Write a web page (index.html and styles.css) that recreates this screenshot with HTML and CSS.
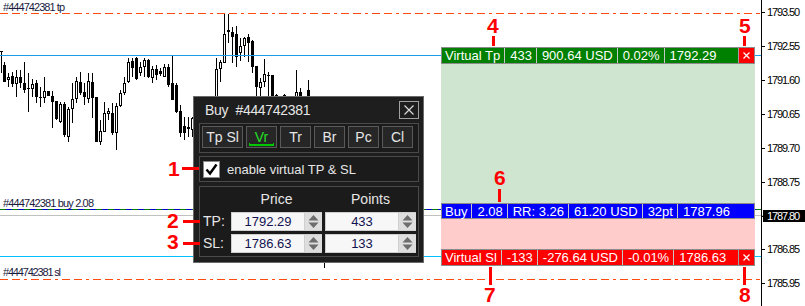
FILE: index.html
```html
<!DOCTYPE html>
<html lang="en">
<head>
    <meta charset="UTF-8">
    <meta name="viewport" content="width=device-width, initial-scale=1.0">
    <title>Virtual TP / SL</title>
    <link rel="stylesheet" href="styles.css">
</head>
<body>
<div class="chart">
    <svg class="canvas" width="805" height="306" viewBox="0 0 805 306">
        <g id="candles"></g>
        <line class="l-stop" x1="0" y1="13.5" x2="760" y2="13.5"/>
        <line class="l-stop" x1="0" y1="279.5" x2="760" y2="279.5"/>
        <line class="l-vtp" x1="0" y1="55.5" x2="761" y2="55.5"/>
        <line class="l-vsl" x1="0" y1="256.5" x2="761" y2="256.5"/>
        <line class="l-bid" x1="0" y1="215.5" x2="763" y2="215.5"/>
        <line class="l-open" x1="0" y1="209.5" x2="761" y2="209.5"/>
        <line class="l-open-dash" x1="0" y1="209.5" x2="761" y2="209.5"/>

        <text class="obj" x="3" y="11" textLength="62">#444742381 tp</text>
        <text class="obj" x="3" y="207" textLength="91">#444742381 buy 2.08</text>
        <text class="obj" x="3" y="276" textLength="58">#444742381 sl</text>

        <rect class="axis" x="761" y="0" width="1" height="306"/>
        <g id="ticks"></g>
        <text class="ax" x="767" y="16" textLength="33">1793.50</text>
        <text class="ax" x="767" y="50" textLength="33">1792.55</text>
        <text class="ax" x="767" y="84" textLength="33">1791.60</text>
        <text class="ax" x="767" y="118" textLength="33">1790.65</text>
        <text class="ax" x="767" y="152" textLength="33">1789.70</text>
        <text class="ax" x="767" y="186" textLength="33">1788.75</text>
        <rect class="axis" x="763" y="210" width="42" height="12"/>
        <text class="ax ax-now" x="767" y="220" textLength="33">1787.80</text>
        <text class="ax" x="767" y="253" textLength="33">1786.85</text>
        <text class="ax" x="767" y="287" textLength="33">1785.95</text>
    </svg>

    <div class="zone zone-tp"></div>
    <div class="zone zone-sl"></div>

    <div class="bar bar-tp">
        <span>Virtual Tp</span><span>433</span><span>900.64 USD</span><span>0.02%</span><span>1792.29</span>
        <i class="x"><svg width="7" height="7"><path d="M0.5 0.5L6.5 6.5M6.5 0.5L0.5 6.5"/></svg></i>
    </div>
    <div class="bar bar-buy">
        <span>Buy</span><span>2.08</span><span>RR: 3.26</span><span>61.20 USD</span><span>32pt</span><span>1787.96</span>
    </div>
    <div class="bar bar-sl">
        <span>Virtual Sl</span><span>-133</span><span>-276.64 USD</span><span>-0.01%</span><span>1786.63</span>
        <i class="x"><svg width="7" height="7"><path d="M0.5 0.5L6.5 6.5M6.5 0.5L0.5 6.5"/></svg></i>
    </div>

    <div class="dlg">
        <div class="dlg-head">
            <span class="dlg-title">Buy  #444742381</span>
            <span class="dlg-close"><svg width="10" height="10"><path d="M0.5 0.5L9.5 9.5M9.5 0.5L0.5 9.5"/></svg></span>
        </div>
        <div class="panel tabs">
            <span class="tab">Tp Sl</span>
            <span class="tab on">Vr</span>
            <span class="tab">Tr</span>
            <span class="tab">Br</span>
            <span class="tab">Pc</span>
            <span class="tab">Cl</span>
        </div>
        <div class="panel check">
            <span class="box"><svg width="15" height="15"><path d="M2.5 7.5L6 11.5L12.5 2.5"/></svg></span>
            <span>enable virtual TP &amp; SL</span>
        </div>
        <div class="panel levels">
            <span></span>
            <span class="hd">Price</span>
            <span class="hd">Points</span>

            <span class="lbl">TP:</span>
            <div class="spin"><span class="val">1792.29</span><span class="arr"><svg width="17" height="17"><path d="M3.5 7.5L8.5 2L13.5 7.5Z M3.5 9.5L8.5 15L13.5 9.5Z"/></svg></span></div>
            <div class="spin"><span class="val">433</span><span class="arr"><svg width="17" height="17"><path d="M3.5 7.5L8.5 2L13.5 7.5Z M3.5 9.5L8.5 15L13.5 9.5Z"/></svg></span></div>

            <span class="lbl">SL:</span>
            <div class="spin"><span class="val">1786.63</span><span class="arr"><svg width="17" height="17"><path d="M3.5 7.5L8.5 2L13.5 7.5Z M3.5 9.5L8.5 15L13.5 9.5Z"/></svg></span></div>
            <div class="spin"><span class="val">133</span><span class="arr"><svg width="17" height="17"><path d="M3.5 7.5L8.5 2L13.5 7.5Z M3.5 9.5L8.5 15L13.5 9.5Z"/></svg></span></div>
        </div>
    </div>

    <span class="num n1">1</span><span class="dash d1"></span>
    <span class="num n2">2</span><span class="dash d2"></span>
    <span class="num n3">3</span><span class="dash d3"></span>
    <span class="num n4">4</span><span class="stem s4"></span>
    <span class="num n5">5</span><span class="stem s5"></span>
    <span class="num n6">6</span><span class="stem s6"></span>
    <span class="num n7">7</span><span class="stem s7"></span>
    <span class="num n8">8</span><span class="stem s8"></span>
</div>

<script>
    // x, wick top, wick bottom, body top, body bottom, bull
    var candles = [
        [1,51,73,51,52,0], [4,62,82,65,82,0], [8,73,87,77,80,1], [12,72,87,76,84,0],
        [16,70,97,77,84,1], [20,70,88,77,83,0], [24,62,93,83,90,0], [28,73,112,88,89,0],
        [32,79,97,84,89,1], [36,80,103,83,97,0], [40,87,107,97,98,0], [44,77,103,91,98,1],
        [48,91,96,91,96,0], [52,91,128,96,102,0], [56,101,120,101,119,0], [60,102,123,104,122,1],
        [64,102,137,104,135,0], [68,107,142,109,137,1], [72,83,123,99,109,1], [76,77,103,81,99,1],
        [80,72,95,82,93,0], [84,83,105,92,97,0], [88,73,103,81,99,1], [92,73,118,82,98,0],
        [96,97,142,97,142,0], [100,120,145,131,142,1], [104,102,132,113,132,1], [108,108,120,111,114,1],
        [112,103,135,113,133,0], [116,103,150,106,133,1], [120,90,107,93,106,1], [124,77,95,83,93,1],
        [128,58,83,62,82,1], [132,58,77,61,68,0], [136,57,80,58,79,0], [140,62,76,67,73,1],
        [144,58,77,60,67,1], [148,59,78,60,77,0], [152,66,83,69,78,1], [156,65,80,69,75,0],
        [160,68,76,71,74,0], [164,64,77,67,77,1], [168,64,87,67,85,0], [172,55,100,83,100,0],
        [176,83,113,85,112,0], [180,105,137,111,133,0], [184,117,140,126,133,0], [188,117,137,127,129,0],
        [192,117,137,118,130,1], [216,58,100,69,100,1], [220,60,82,62,69,1], [224,14,63,34,63,1],
        [228,14,43,30,32,0], [232,27,63,32,37,0], [236,26,67,34,57,0], [240,38,61,46,53,1],
        [244,37,57,38,46,1], [248,34,62,37,43,0], [252,40,73,41,67,0], [256,66,100,66,87,0],
        [260,78,100,82,88,1], [264,59,87,74,82,1], [268,72,100,75,76,0], [272,75,100,75,100,0],
        [276,94,100,95,96,0], [284,94,100,95,96,0], [296,70,100,92,100,1], [300,88,100,92,100,0],
        [308,80,100,90,100,0], [324,255,268,262,263,0]
    ];
    var ns = "http://www.w3.org/2000/svg";

    function rect(parent, x, y, w, h, cls) {
        var r = document.createElementNS(ns, "rect");
        r.setAttribute("x", x);
        r.setAttribute("y", y);
        r.setAttribute("width", w);
        r.setAttribute("height", h);
        r.setAttribute("class", cls);
        parent.appendChild(r);
    }

    var g = document.getElementById("candles");
    for (var i = 0; i < candles.length; i++) {
        var c = candles[i];
        rect(g, c[0], c[1], 1, c[2] - c[1], "wick");
        rect(g, c[0] - 1, c[3], 3, Math.max(1, c[4] - c[3]), "body");
        if (c[5] && c[4] - c[3] > 2) {
            rect(g, c[0], c[3] + 1, 1, c[4] - c[3] - 2, "hollow");
        }
    }

    var ticks = document.getElementById("ticks");
    var ys = [12, 46, 80, 114, 148, 182, 216, 249, 283];
    for (var j = 0; j < ys.length; j++) {
        rect(ticks, 762, ys[j], 3, 1, "axis");
    }
</script>
</body>
</html>
```

FILE: styles.css
```css
body {
    margin: 0;
    background: #fff;
    font-family: "Liberation Sans", Arial, sans-serif;
}
.chart {
    position: relative;
    width: 805px;
    height: 306px;
    overflow: hidden;
}
.canvas {
    display: block;
}
.canvas line {
    shape-rendering: crispEdges;
    stroke-width: 1;
}

/* chart objects */
.l-stop {
    stroke: #ff4a10;
    stroke-dasharray: 8 4 8 4 3 4;
}
.l-vtp {
    stroke: #1a9ee8;
}
.l-vsl {
    stroke: #00c0ff;
}
.l-bid {
    stroke: #c0c0c0;
}
.l-open {
    stroke: #0000c8;
}
.l-open-dash {
    stroke: #008000;
    stroke-dasharray: 6 6;
}
.wick, .body, .axis {
    fill: #000;
}
.hollow {
    fill: #fff;
}
.obj {
    font-size: 11px;
    fill: #1a1a40;
}
.ax {
    font-size: 11px;
    fill: #000;
}
.ax-now {
    fill: #fff;
}

/* virtual levels */
.zone {
    position: absolute;
    left: 441px;
    width: 314px;
}
.zone-tp {
    top: 64px;
    height: 139px;
    background: #cfe5cf;
}
.zone-sl {
    top: 219px;
    height: 30px;
    background: #ffcccc;
}
.bar {
    position: absolute;
    left: 441px;
    width: 314px;
    height: 17px;
    box-sizing: border-box;
    border: 1px solid #8c8c8c;
    display: flex;
    color: #fff;
    font-size: 13px;
    line-height: 15px;
    white-space: nowrap;
}
.bar span {
    padding: 0 4px 0 5px;
    border-left: 1px solid #c8c8c8;
}
.bar span:first-child {
    padding-left: 3px;
    border-left: none;
}
.bar-tp {
    top: 47px;
    background: #008000;
}
.bar-buy {
    top: 203px;
    height: 16px;
    background: #0000ff;
}
.bar-sl {
    top: 249px;
    background: #ff0000;
}
.bar .x {
    margin-left: auto;
    width: 15px;
    display: flex;
    align-items: center;
    justify-content: center;
    background: #ff0000;
    border-left: 1px solid #a0a0a0;
}
.bar .x path {
    stroke: #fff;
    stroke-width: 1.2;
}

/* dialog */
.dlg {
    position: absolute;
    left: 193px;
    top: 96px;
    width: 231px;
    box-sizing: border-box;
    border: 1px solid #6a6a6a;
    background: #1e1e1e;
    padding: 0 4px 5px 5px;
    color: #e6e6e6;
    font-size: 13px;
}
.dlg-head {
    height: 26px;
    display: flex;
    align-items: center;
    justify-content: space-between;
    padding-left: 6px;
    font-size: 14px;
}
.dlg-title {
    white-space: pre;
    letter-spacing: -0.3px;
}
.dlg-close {
    width: 20px;
    height: 18px;
    box-sizing: border-box;
    border: 1px solid #a0a0a0;
    display: flex;
    align-items: center;
    justify-content: center;
}
.dlg-close path {
    stroke: #d8d8d8;
    stroke-width: 1.2;
}
.panel {
    border: 1px solid #4a4a4a;
    background: #1b1b1b;
}
.tabs {
    display: grid;
    grid-template-columns: 41px repeat(5, 31px);
    gap: 3px;
    padding: 2px 3px 4px 2px;
    font-size: 14px;
}
.tab {
    position: relative;
    height: 22px;
    box-sizing: border-box;
    border: 1px solid #5a5a5a;
    background: #262626;
    display: flex;
    align-items: center;
    justify-content: center;
}
.tab.on {
    color: #22e022;
}
.tab.on::after {
    content: "";
    position: absolute;
    left: 2px;
    right: 2px;
    bottom: 1px;
    height: 3px;
    border: 1px solid #00c800;
    border-top: none;
    border-bottom-width: 2px;
    box-sizing: border-box;
}
.check {
    margin-top: 3px;
    height: 26px;
    box-sizing: border-box;
    display: flex;
    align-items: center;
    gap: 7px;
    padding-left: 3px;
}
.box {
    width: 17px;
    height: 17px;
    box-sizing: border-box;
    border: 1px solid #8a8a8a;
    background: #fff;
    display: flex;
    align-items: center;
    justify-content: center;
}
.box path {
    fill: none;
    stroke: #000;
    stroke-width: 2.4;
}
.levels {
    margin-top: 4px;
    display: grid;
    grid-template-columns: 25px 91px 91px;
    grid-template-rows: 20px 19px 19px;
    gap: 3px;
    padding: 2px 0 3px 3px;
}
.hd {
    text-align: center;
    line-height: 20px;
    font-size: 14px;
}
.lbl {
    line-height: 19px;
    font-size: 14px;
}
.spin {
    display: flex;
}
.val {
    flex: 1;
    background: #f7f7f7;
    border: 1px solid #cfcfcf;
    color: #121250;
    text-align: center;
    line-height: 17px;
}
.arr {
    width: 17px;
    background: #dedede;
    border-top: 1px solid #cfcfcf;
    border-bottom: 1px solid #cfcfcf;
}
.arr svg {
    display: block;
}
.arr path {
    fill: #6d6d6d;
}

/* callouts */
.num {
    position: absolute;
    color: #ff0000;
    font-size: 21px;
    font-weight: bold;
    line-height: 1;
}
.dash, .stem {
    position: absolute;
    background: #ff0000;
}
.dash {
    width: 17px;
    height: 3px;
}
.stem {
    width: 3px;
}
.n1 { left: 168px; top: 158px; }
.d1 { left: 182px; top: 167px; }
.n2 { left: 167px; top: 210px; }
.d2 { left: 183px; top: 220px; }
.n3 { left: 167px; top: 231px; }
.d3 { left: 183px; top: 242px; }
.n4 { left: 487px; top: 15px; }
.s4 { left: 492px; top: 36px; height: 10px; }
.n5 { left: 739px; top: 15px; }
.s5 { left: 743px; top: 36px; height: 10px; }
.n6 { left: 494px; top: 167px; }
.s6 { left: 498px; top: 189px; height: 13px; }
.n7 { left: 484px; top: 284px; }
.s7 { left: 489px; top: 267px; height: 18px; }
.n8 { left: 739px; top: 284px; }
.s8 { left: 743px; top: 267px; height: 18px; }
```
